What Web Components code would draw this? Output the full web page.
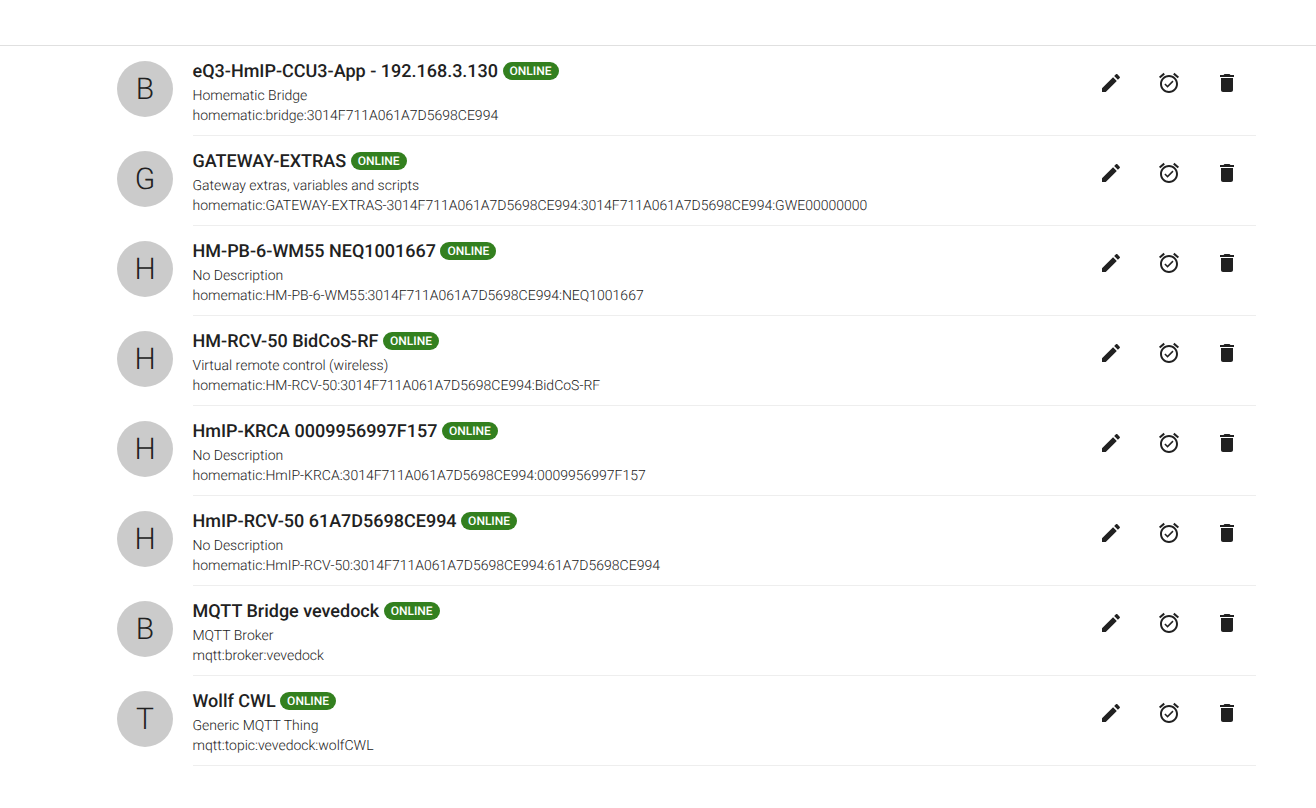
<!DOCTYPE html>
<html>
<head>
<meta charset="utf-8">
<title>Things</title>
<style>
    html, body { margin: 0; background: #fff; }
    body { font-family: Roboto, "Liberation Sans", sans-serif; color: #212121; text-rendering: geometricPrecision; }
</style>
</head>
<body>
<thing-list>
    <thing-item name="eQ3-HmIP-CCU3-App - 192.168.3.130" description="Homematic Bridge" uid="homematic:bridge:3014F711A061A7D5698CE994"></thing-item>
    <thing-item name="GATEWAY-EXTRAS" description="Gateway extras, variables and scripts" uid="homematic:GATEWAY-EXTRAS-3014F711A061A7D5698CE994:3014F711A061A7D5698CE994:GWE00000000"></thing-item>
    <thing-item name="HM-PB-6-WM55 NEQ1001667" description="No Description" uid="homematic:HM-PB-6-WM55:3014F711A061A7D5698CE994:NEQ1001667"></thing-item>
    <thing-item name="HM-RCV-50 BidCoS-RF" description="Virtual remote control (wireless)" uid="homematic:HM-RCV-50:3014F711A061A7D5698CE994:BidCoS-RF"></thing-item>
    <thing-item name="HmIP-KRCA 0009956997F157" description="No Description" uid="homematic:HmIP-KRCA:3014F711A061A7D5698CE994:0009956997F157"></thing-item>
    <thing-item name="HmIP-RCV-50 61A7D5698CE994" description="No Description" uid="homematic:HmIP-RCV-50:3014F711A061A7D5698CE994:61A7D5698CE994"></thing-item>
    <thing-item name="MQTT Bridge vevedock" description="MQTT Broker" uid="mqtt:broker:vevedock" letter="B"></thing-item>
    <thing-item name="Wollf CWL" description="Generic MQTT Thing" uid="mqtt:topic:vevedock:wolfCWL" letter="T"></thing-item>
</thing-list>
<script>
var listtemplate = document.createElement("template");
listtemplate.innerHTML = `
<style>
    :host { display: block; }
    #bar { height: 45px; border-bottom: 1px solid #e0e0e0; background: #fff; }
    #items { padding: 0 60px 0 117px; }
</style>
<div id="bar"></div>
<div id="items"><slot></slot></div>
`;

class ThingList extends HTMLElement {
    constructor(){
        super();
        this.attachShadow({mode:"open"});
        this.shadowRoot.appendChild(listtemplate.content.cloneNode(true));
    }
}

var itemtemplate = document.createElement("template");
itemtemplate.innerHTML = `
<style>
    :host { display: flex; height: 90px; }
    #avatar {
        width: 56px;
        height: 56px;
        margin: 15px 20px 0 0;
        flex: none;
        border-radius: 50%;
        background: #cbcbcb;
        display: flex;
        justify-content: center;
        align-items: center;
        font-size: 30px;
        font-weight: 300;
        color: #212121;
    }
    #body {
        flex: 1;
        display: flex;
        border-bottom: 1px solid #eeeeee;
    }
    #text { flex: 1; padding-top: 14px; margin-left: -0.5px; }
    #title {
        display: flex;
        align-items: center;
        height: 22px;
        gap: 4.5px;
        font-size: 18px;
        font-weight: 500;
        color: #212121;
    }
    #badge {
        height: 18px;
        line-height: 18px;
        padding: 0 7px;
        border-radius: 9px;
        background: #33801f;
        color: #fff;
        font-size: 12px;
        font-weight: 500;
    }
    .line {
        height: 20px;
        line-height: 20px;
        font-size: 14px;
        font-weight: 300;
        color: #212121;
    }
    #description { margin-top: 4px; }
    #actions {
        display: flex;
        gap: 34px;
        padding: 25px 17px 0 0;
    }
    svg { width: 24px; height: 24px; display: block; fill: #212121; }
</style>
<div id="avatar"></div>
<div id="body">
    <div id="text">
        <div id="title"><span id="name"></span><span id="badge">ONLINE</span></div>
        <div class="line" id="description"></div>
        <div class="line" id="uid"></div>
    </div>
    <div id="actions">
        <svg viewBox="0 0 24 24"><path d="M3 17.25V21h3.75L17.81 9.94l-3.75-3.75L3 17.25zM20.71 7.04c.39-.39.39-1.02 0-1.41l-2.34-2.34c-.39-.39-1.02-.39-1.41 0l-1.83 1.83 3.75 3.75 1.83-1.83z"/></svg>
        <svg viewBox="0 0 24 24"><path d="M22 5.72l-4.6-3.86-1.29 1.53 4.6 3.86L22 5.72zM7.88 3.39L6.6 1.86 2 5.71l1.29 1.53 4.59-3.85zM12 4c-4.97 0-9 4.03-9 9s4.02 9 9 9c4.97 0 9-4.03 9-9s-4.03-9-9-9zm0 16c-3.86 0-7-3.14-7-7s3.14-7 7-7 7 3.14 7 7-3.14 7-7 7zm-1.46-5.47L8.41 12.4l-1.06 1.06 3.18 3.18 6-6-1.06-1.06-4.93 4.95z"/></svg>
        <svg viewBox="0 0 24 24"><path d="M6 19c0 1.1.9 2 2 2h8c1.1 0 2-.9 2-2V7H6v12zM19 4h-3.5l-1-1h-5l-1 1H5v2h14V4z"/></svg>
    </div>
</div>
`;

class ThingItem extends HTMLElement {
    constructor(){
        super();
        this.attachShadow({mode:"open"});
        this.shadowRoot.appendChild(itemtemplate.content.cloneNode(true));
    }

    connectedCallback(){
        var name = this.getAttribute("name");
        var uid = this.getAttribute("uid");
        // bridges get a B, everything else the first letter of the name
        var letter = this.getAttribute("letter");
        if (!letter) letter = uid.indexOf(":bridge:") > -1 ? "B" : name.charAt(0);
        this.shadowRoot.querySelector("#avatar").textContent = letter;
        this.shadowRoot.querySelector("#name").textContent = name;
        this.shadowRoot.querySelector("#description").textContent = this.getAttribute("description");
        this.shadowRoot.querySelector("#uid").textContent = uid;
    }
}

customElements.define("thing-list", ThingList);
customElements.define("thing-item", ThingItem);
</script>
</body>
</html>
